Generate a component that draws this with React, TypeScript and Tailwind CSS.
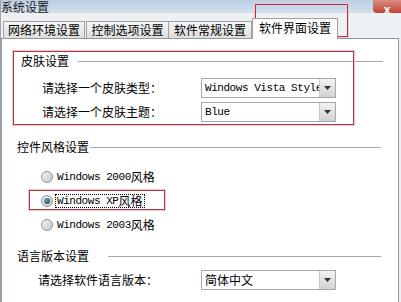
import React from 'react';

const cjk = "font-['Noto_Sans_CJK_SC',sans-serif]";
const mono = "font-['Liberation_Mono','Noto_Sans_CJK_SC',monospace] text-[11px] tracking-[-0.45px]";

const Latin: React.FC<{ children: React.ReactNode }> = ({ children }) => (
  <span className={mono}>{children}</span>
);

const Select: React.FC<{ children: React.ReactNode }> = ({ children }) => (
  <div className="flex h-[20px] w-[135px] border border-[#a3a9b0] bg-white">
    <div className="flex flex-1 items-center overflow-hidden whitespace-nowrap pl-[3px] text-[12px] leading-none text-black">
      {children}
    </div>
    <div className="flex w-[16px] items-center justify-center border-l border-[#c9c9c9] bg-gradient-to-b from-[#f3f3f3] to-[#d2d2d2]">
      <svg width="7" height="4" viewBox="0 0 7 4">
        <path d="M0 0h7L3.5 4z" fill="#333" />
      </svg>
    </div>
  </div>
);

const GroupHeader: React.FC<{ title: string; pad: string; gap: string; right: string }> = ({ title, pad, gap, right }) => (
  <div className={`flex h-[16px] items-center ${pad} ${right}`}>
    <span className={`${cjk} text-[12px] leading-none text-black`}>{title}</span>
    <div className={`h-px flex-1 bg-[#a8a8a8] ${gap}`} />
  </div>
);

const Radio: React.FC<{ checked?: boolean; focus?: boolean; label: string }> = ({ checked, focus, label }) => (
  <div className="flex h-[24px] items-center pl-[39px]">
    <div className="flex h-[12px] w-[12px] items-center justify-center rounded-full border border-[#8f969d] bg-gradient-to-br from-[#f4f4f4] to-[#c6c6c6]">
      {checked && <div className="h-[6px] w-[6px] rounded-full bg-[radial-gradient(circle_at_35%_35%,#6fa2b2,#163f4d)]" />}
    </div>
    <div className={`ml-[3px] flex h-[12px] items-center px-[1px] text-black ${focus ? 'outline outline-1 outline-dotted outline-black' : ''}`}>
      <Latin>Windows {label}</Latin>
      <span className={`${cjk} text-[12px] leading-none`}>风格</span>
    </div>
  </div>
);

const App: React.FC = () => {
  const tabs = ['网络环境设置', '控制选项设置', '软件常规设置'];
  const widths = ['w-[82px]', 'ml-[1px] w-[83px]', '-ml-px w-[84px]'];

  return (
    <div className={`relative h-[302px] w-[401px] overflow-hidden border-l border-[#9aa3ad] bg-[#eef1f4] ${cjk}`}>
      {/* title bar */}
      <div className="flex h-[13px] items-start justify-between bg-gradient-to-b from-[#bccee2] to-[#d3dfec]">
        <span className="ml-0 text-[12px] leading-[13px] text-[#1a1a1a]">系统设置</span>
        <div className="flex h-[13px] w-[28px] items-end justify-center rounded-bl-[4px] bg-gradient-to-b from-[#d88a80] to-[#c04436]">
          <span className="-mb-[1px] text-[12px] leading-[10px] font-bold text-white">x</span>
        </div>
      </div>

      {/* tabs */}
      <div className="mt-[5px] flex h-[20px] items-end pl-[2px]">
        {tabs.map((t, i) => (
          <div
            key={t}
            className={`flex h-[17px] items-center justify-center border border-b-0 border-[#a0a0a0] bg-gradient-to-b from-[#f6f6f6] to-[#dedede] text-[12px] leading-none text-black ${widths[i]}`}
          >
            {t}
          </div>
        ))}
        <div className="relative z-10 -mb-px flex h-[21px] w-[86px] items-start justify-center border border-b-0 border-[#a0a0a0] bg-white pt-[3px] text-[12px] leading-none text-black">
          软件界面设置
        </div>
      </div>

      {/* panel */}
      <div className="h-[300px] w-[398px] border border-[#919b9c] bg-white">
        <div className="mt-[14px]">
          <GroupHeader title="皮肤设置" pad="pl-[19px]" gap="ml-[9px]" right="pr-[15px]" />
          <div className="mt-[9px] flex h-[20px] items-center pl-[40px]">
            <span className="w-[159px] text-[12px] leading-none text-black">请选择一个皮肤类型：</span>
            <Select>
              <Latin>Windows Vista Style</Latin>
            </Select>
          </div>
          <div className="mt-[4px] flex h-[20px] items-center pl-[40px]">
            <span className="w-[159px] text-[12px] leading-none text-black">请选择一个皮肤主题：</span>
            <Select>
              <Latin>Blue</Latin>
            </Select>
          </div>
        </div>

        <div className="mt-[17px]">
          <GroupHeader title="控件风格设置" pad="pl-[15px]" gap="ml-[1px]" right="pr-[17px]" />
          <div className="mt-[10px]">
            <Radio label="2000" />
            <Radio label="XP" checked focus />
            <Radio label="2003" />
          </div>
        </div>

        <div className="mt-[11px]">
          <GroupHeader title="语言版本设置" pad="pl-[15px]" gap="ml-[19px]" right="pr-[17px]" />
          <div className="mt-[6px] flex h-[20px] items-center pl-[36px]">
            <span className="w-[163px] text-[12px] leading-none text-black">请选择软件语言版本：</span>
            <Select>
              <span className="text-[12px]">简体中文</span>
            </Select>
          </div>
        </div>
      </div>

      {/* red annotation boxes */}
      <div className="pointer-events-none absolute left-[254px] top-[4px] h-[33px] w-[93px] border border-[#b23440] shadow-[0_0_0_1px_#efc9cd]" />
      <div className="pointer-events-none absolute left-[12px] top-[51px] h-[74px] w-[341px] border border-[#b23440] shadow-[0_0_0_1px_#efc9cd]" />
      <div className="pointer-events-none absolute left-[28px] top-[190px] h-[20px] w-[136px] border border-[#b23440] shadow-[0_0_0_1px_#efc9cd]" />
    </div>
  );
};

export default App;
